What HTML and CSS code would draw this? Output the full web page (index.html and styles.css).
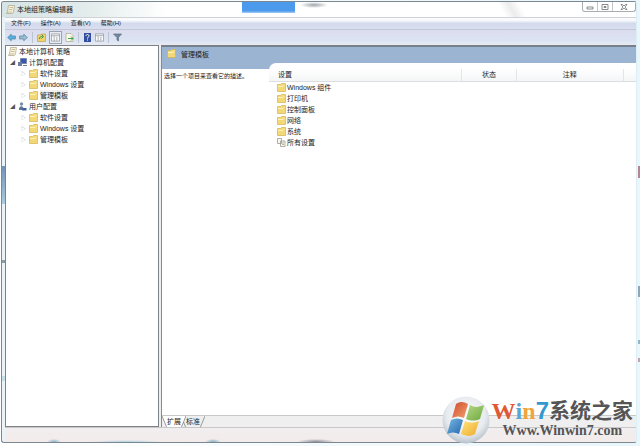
FILE: index.html
```
<!DOCTYPE html>
<html lang="zh-CN">
<head>
    <meta charset="UTF-8">
    <meta name="viewport" content="width=device-width, initial-scale=1">
    <title>本地组策略编辑器</title>
    <link rel="stylesheet" href="styles.css">
</head>
<body>
    <!-- Shared icons -->
    <svg class="symbols" aria-hidden="true">
        <symbol id="folder" viewBox="0 0 9 9">
            <path d="M.5 1.5h3l1-1h4v8h-8z" fill="#f3d878" stroke="#d3b24e" stroke-width=".7"/>
            <path d="M1 3.5h5l1.5-1.5" fill="none" stroke="#fff3b8"/>
        </symbol>
        <symbol id="scroll" viewBox="0 0 9 9">
            <path d="M2.5.5h6l-1 6.5-1 1.5h-6l1-2z" fill="#f5f1df" stroke="#aaa489" stroke-width=".7"/>
            <path d="M3.5 2.5h3.5M3 4.5h3.5M1 7h5" stroke="#bda973" stroke-width=".7"/>
        </symbol>
        <symbol id="arrow" viewBox="0 0 10 9">
            <path d="M.7 4.5l4-3.7v2h4.6v3.4H4.7v2z" fill="currentColor" stroke="#4b7897" stroke-width=".7"/>
        </symbol>
        <symbol id="pane" viewBox="0 0 10 9">
            <path d="M.5.5h9v8h-9z" fill="#fafafa" stroke="#8d949c" stroke-width=".8"/>
            <path d="M.5 2.5h9M3.5 3v5.5M6.5 4v4" stroke="#8d949c" stroke-width=".8"/>
        </symbol>
    </svg>

    <div class="window">
        <header class="title-bar">
            <svg class="icon"><use href="#scroll"/></svg>
            <h1>本地组策略编辑器</h1>
            <div class="window-buttons">
                <button type="button" aria-label="最小化"><svg viewBox="0 0 8 8"><path d="M1 4h6v2H1z"/></svg></button>
                <button type="button" aria-label="最大化"><svg viewBox="0 0 8 8"><path d="M1 1.5h6v5H1zM3 3.5h2v1H3z"/></svg></button>
                <button type="button" class="close" aria-label="关闭"><svg viewBox="0 0 8 8"><path d="M1 1.5h1.5L4 3l1.5-1.5H7L5 4l2 2.5H5.5L4 5 2.5 6.5H1L3 4z"/></svg></button>
            </div>
        </header>

        <nav class="menu-bar">
            <button type="button">文件(F)</button>
            <button type="button">操作(A)</button>
            <button type="button">查看(V)</button>
            <button type="button">帮助(H)</button>
        </nav>

        <div class="toolbar">
            <button type="button" class="back" aria-label="后退"><svg class="icon"><use href="#arrow"/></svg></button>
            <button type="button" class="forward" aria-label="前进"><svg class="icon"><use href="#arrow"/></svg></button>
            <span class="separator"></span>
            <button type="button" aria-label="上一级"><svg class="icon" viewBox="0 0 9 9"><path d="M.5 2h3l1-1h4v7.5h-8z" fill="#f0d36d" stroke="#bea04a" stroke-width=".7"/><path d="M2.5 6c0-2 1-2.5 3-2.5M4.5 1.5l2 2-2 2" fill="none" stroke="#369340"/></svg></button>
            <button type="button" class="pressed" aria-label="显示控制台树"><svg class="icon"><use href="#pane"/></svg></button>
            <button type="button" aria-label="导出列表"><svg class="icon" viewBox="0 0 9 9"><path d="M1 .5h5l2 2v6H1z" fill="#fbf9e9" stroke="#a7a890" stroke-width=".7"/><path d="M3 5.5h5M6 3.5l2 2-2 2" fill="none" stroke="#43a044"/></svg></button>
            <span class="separator"></span>
            <button type="button" aria-label="帮助"><svg class="icon" viewBox="0 0 9 9"><path d="M1 0h7v9H1z" fill="#334fa0"/><path d="M3 3c0-2 3-2 3 0 0 1-1.5 1-1.5 2.5M4.5 6.5v1" fill="none" stroke="#fff"/></svg></button>
            <button type="button" aria-label="显示操作窗格"><svg class="icon"><use href="#pane"/></svg></button>
            <span class="separator"></span>
            <button type="button" aria-label="筛选器"><svg class="icon" viewBox="0 0 9 9"><path d="M.5 1h8L5.5 4.5V8L4 7V4.5z" fill="#7189a5" stroke="#5d6d7f" stroke-width=".7"/></svg></button>
        </div>

        <main class="panes">
            <aside class="tree">
                <div class="node"><svg class="icon"><use href="#scroll"/></svg>本地计算机 策略</div>
                <ul>
                    <li>
                        <div class="node open"><svg class="icon" viewBox="0 0 9 9"><path d="M2.5.5h6v5h-6z" fill="#3757b4" stroke="#7886a8"/><path d="M0 4h4v4H0zM5 7h4v1H5z" fill="#6d7d9d"/></svg>计算机配置</div>
                        <ul>
                            <li class="node closed"><svg class="icon"><use href="#folder"/></svg>软件设置</li>
                            <li class="node closed"><svg class="icon"><use href="#folder"/></svg>Windows 设置</li>
                            <li class="node closed"><svg class="icon"><use href="#folder"/></svg><span class="current">管理模板</span></li>
                        </ul>
                    </li>
                    <li>
                        <div class="node open"><svg class="icon" viewBox="0 0 9 9"><circle cx="3.5" cy="2" r="1.7" fill="#7b91a7"/><path d="M1 8V6l2-2 2 1 1 3z" fill="#5c7797"/><path d="M5 6h3.5v2.5H4z" fill="#3e5e9f"/></svg>用户配置</div>
                        <ul>
                            <li class="node closed"><svg class="icon"><use href="#folder"/></svg>软件设置</li>
                            <li class="node closed"><svg class="icon"><use href="#folder"/></svg>Windows 设置</li>
                            <li class="node closed"><svg class="icon"><use href="#folder"/></svg>管理模板</li>
                        </ul>
                    </li>
                </ul>
            </aside>

            <section class="details">
                <div class="details-header"><svg class="icon"><use href="#folder"/></svg><h2>管理模板</h2></div>
                <div class="details-body">
                    <p class="description">选择一个项目来查看它的描述。</p>
                    <div class="list">
                        <table>
                            <thead>
                                <tr><th class="name">设置</th><th class="state">状态</th><th class="comment">注释</th><th class="rest"></th></tr>
                            </thead>
                            <tbody>
                                <tr><td colspan="4"><svg class="icon"><use href="#folder"/></svg>Windows 组件</td></tr>
                                <tr><td colspan="4"><svg class="icon"><use href="#folder"/></svg>打印机</td></tr>
                                <tr><td colspan="4"><svg class="icon"><use href="#folder"/></svg>控制面板</td></tr>
                                <tr><td colspan="4"><svg class="icon"><use href="#folder"/></svg>网络</td></tr>
                                <tr><td colspan="4"><svg class="icon"><use href="#folder"/></svg>系统</td></tr>
                                <tr><td colspan="4"><svg class="icon" viewBox="0 0 9 9"><path d="M.5.5h4v5h-4zM3.5 3h4.5v5.5H3.5z" fill="#faf8ee" stroke="#999" stroke-width=".8"/><path d="M5 5h2M5 6.5h2" stroke="#b69b58" stroke-width=".7"/></svg>所有设置</td></tr>
                            </tbody>
                        </table>
                    </div>
                </div>
                <div class="tabs">
                    <svg class="slope" viewBox="0 0 5 12"><path d="M0 0h5v12z" fill="#fff" stroke="none"/><path d="M0 0l5 12"/></svg>
                    <button type="button" class="active">扩展</button>
                    <svg class="slope" viewBox="0 0 5 12"><path d="M0 0h5L0 12z" fill="#fff" stroke="none"/><path d="M5 0L0 12M2.5 6L5 12"/></svg>
                    <button type="button">标准</button>
                    <svg class="slope" viewBox="0 0 5 12"><path d="M5 0L0 12"/></svg>
                </div>
            </section>
        </main>
        <footer class="status-bar"></footer>
    </div>

    <!-- Site mark over the bottom right corner -->
    <div class="watermark">
        <svg class="orb" viewBox="0 0 48 48">
            <defs>
                <radialGradient id="glass" cx=".5" cy=".4" r=".6"><stop offset="0" stop-color="#fff"/><stop offset=".7" stop-color="#e6eaee"/><stop offset="1" stop-color="#b7c1cb"/></radialGradient>
                <linearGradient id="red" x2="1" y2="1"><stop stop-color="#ce4c2d"/><stop offset="1" stop-color="#f3a06d"/></linearGradient>
                <linearGradient id="green" x2="1" y2="1"><stop stop-color="#b6d788"/><stop offset="1" stop-color="#6daa3c"/></linearGradient>
                <linearGradient id="blue" x2="1" y2="1"><stop stop-color="#77b8e5"/><stop offset="1" stop-color="#2868ad"/></linearGradient>
                <linearGradient id="yellow" x2="1" y2="1"><stop stop-color="#ffe47b"/><stop offset="1" stop-color="#edaa2d"/></linearGradient>
            </defs>
            <circle cx="24" cy="24" r="23.5" fill="url(#glass)"/>
            <path d="M14 8c5-3 8-2 12 0l-4 14c-4-2-8-2-12 0z" fill="url(#red)"/>
            <path d="M28 9c5 3 9 2 14 0l-4 14c-5 2-9 2-14 0z" fill="url(#green)"/>
            <path d="M9 24c4-2 8-2 12 0l-4 14c-4-2-8-2-12 0z" fill="url(#blue)"/>
            <path d="M23 25c5 2 9 2 14 0l-4 13c-5 3-9 2-14 0z" fill="url(#yellow)"/>
        </svg>
        <div class="mark-text">
            <div class="mark-name"><span class="w">W</span><span class="i">i</span><span class="n">n</span><span class="seven">7</span><span class="home">系统之家</span></div>
            <div class="mark-url">Www.Winwin7.com</div>
        </div>
    </div>
</body>
</html>
```
FILE: styles.css
```
* {
    margin: 0;
    padding: 0;
    box-sizing: border-box;
}

body {
    display: flex;
    height: 100vh;
    padding: 1px 3px 3px 1px;
    overflow: hidden;
    font-family: "Liberation Sans", "Noto Sans CJK SC", sans-serif;
    font-size: 7px;
    line-height: 11px;
    color: #222;
    background:
        linear-gradient(#b78591, #b78591) right 166px / 2px 12px no-repeat,
        linear-gradient(#91a6b8, #91a6b8) right 286px / 2px 11px no-repeat,
        linear-gradient(#91b8c4, #91b8c4) right 340px / 2px 4px no-repeat,
        linear-gradient(#c7a0a9, #c7a0a9) right 358px / 2px 4px no-repeat,
        linear-gradient(to right, #fff, #e9f6fb);
}

button {
    border: none;
    background: none;
    font: inherit;
    color: inherit;
    cursor: pointer;
}

h1, h2, th {
    font-size: 7px;
    font-weight: normal;
}

ul {
    list-style: none;
}

.symbols {
    position: absolute;
    width: 0;
    height: 0;
}

.icon {
    flex: none;
    width: 9px;
    height: 9px;
}

.window {
    flex: 1;
    display: flex;
    flex-direction: column;
    min-width: 0;
    border: 1px solid #7b8791;
    border-right-color: #dbeef5;
    border-radius: 3px;
    overflow: hidden;
    /* glass frame with the desktop showing through */
    background:
        linear-gradient(#6f94b6, #a9cde2) 0 164px / 3px 38px no-repeat,
        linear-gradient(#8a9ba8, #8a9ba8) 0 258px / 3px 3px no-repeat,
        linear-gradient(#c4e0e9, #c4e0e9) 0 374px / 3px 5px no-repeat,
        #eaf4f8;
}

/* Title bar */
.title-bar {
    display: flex;
    align-items: center;
    gap: 2px;
    height: 15px;
    padding-left: 4px;
    background:
        radial-gradient(closest-side, #9fa5ab, transparent) 298px 0 / 28px 6px no-repeat,
        linear-gradient(#4b9aeb 80%, #a8cef4) 240px 0 / 53px 11px no-repeat,
        linear-gradient(60deg, transparent 42%, #ecebed 50%, transparent 58%) 450px 0 / 120px 15px no-repeat,
        linear-gradient(to right, #d5e4e5, #e4ecec 14%, #fff 26%);
}

.window-buttons {
    display: flex;
    align-self: flex-start;
    margin-left: auto;
    border: 1px solid #a8adb2;
    border-top: none;
    border-radius: 0 0 3px 3px;
}

.window-buttons button {
    display: flex;
    align-items: center;
    justify-content: center;
    width: 15px;
    height: 9px;
    border-right: 1px solid #c3c7ca;
}

.window-buttons .close {
    width: 22px;
    border-right: none;
}

.window-buttons svg {
    width: 8px;
    height: 8px;
    fill: #fff;
    stroke: #6d7174;
    stroke-width: .8;
}

/* Menu and toolbar */
.menu-bar {
    display: flex;
    gap: 10px;
    height: 13px;
    margin-left: 3px;
    padding-left: 6px;
    font-size: 6px;
    border-top: 1px solid #cfd2d6;
    border-bottom: 1px solid #c2c7d8;
    background: linear-gradient(#fafbfd 20%, #d3daeb 50%, #dadff0);
}

.toolbar {
    display: flex;
    align-items: center;
    gap: 3px;
    height: 15px;
    margin-left: 3px;
    padding-left: 2px;
    background: linear-gradient(#dcdced, #dbe4f4 70%, #e8eaf0);
}

.toolbar button {
    display: flex;
}

.toolbar .back {
    color: #55b1e2;
}

.toolbar .forward {
    color: #9abdd1;
    transform: scaleX(-1);
}

.toolbar .pressed {
    padding: 1px;
    border: 1px solid #9aa3b4;
    background: #e9ecf3;
}

.separator {
    width: 1px;
    height: 11px;
    margin: 0 1px;
    background: #bcc3d2;
}

/* Panes */
.panes {
    flex: 1;
    display: flex;
    gap: 2px;
    min-height: 0;
    margin-left: 3px;
    background: #eeeeef;
}

.tree {
    flex: 0 0 154px;
    border: 1px solid #7d8288;
    border-left-color: #6e8793;
    background: #fff;
}

.node {
    display: flex;
    align-items: center;
    gap: 2px;
    padding-left: 2px;
}

.node::before {
    flex: none;
    width: 6px;
    font-size: 5px;
    color: #555;
}

.tree > ul .node {
    padding-left: 4px;
}

.tree ul ul .node {
    padding-left: 15px;
}

.open::before {
    content: "◢";
}

.closed::before {
    content: "▷";
    color: #999;
}

.current {
    background: #f1f1f1;
}

.details {
    flex: 1;
    display: flex;
    flex-direction: column;
    min-width: 0;
    border-top: 2px solid #77808a;
    border-left: 1px solid #858b91;
    background: #fff;
}

.details-header {
    display: flex;
    gap: 5px;
    height: 16px;
    padding: 2px 5px;
    background: #9ab4d2;
}

.details-body {
    flex: 1;
    display: flex;
    background: linear-gradient(#9ab4d2, #9ab4d2) 0 0 / 100% 6px no-repeat;
}

.description {
    flex: 0 0 107px;
    padding: 8px 0 0 2px;
    font-size: 6px;
    white-space: nowrap;
}

.list {
    flex: 1;
    padding-top: 6px;
    border-top-left-radius: 7px;
    background: #fff;
}

table {
    width: 100%;
    table-layout: fixed;
    border-collapse: collapse;
}

th {
    height: 12px;
    border-right: 1px solid #e3e6e9;
    border-bottom: 1px solid #dcdfe2;
    background: linear-gradient(#fff, #f4f5f6);
}

.name {
    padding-left: 9px;
    text-align: left;
}

.state {
    width: 15%;
}

.comment {
    width: 29%;
}

.rest {
    width: 13px;
    border-right: none;
}

td {
    height: 11px;
    padding-left: 8px;
}

td .icon {
    margin-right: 1px;
    vertical-align: middle;
}

.tabs {
    display: flex;
    height: 12px;
    background: #efeff0;
    border-top: 1px solid #c8c8c8;
}

.tabs .active {
    background: #fff;
}

.slope {
    width: 5px;
    height: 12px;
    fill: none;
    stroke: #777;
    stroke-width: .7;
}

.status-bar {
    height: 15px;
    margin-left: 3px;
    border-top: 1px solid #c9c7c8;
    background:
        radial-gradient(closest-side, #91b5cc, transparent) 42px 11px / 14px 5px no-repeat,
        radial-gradient(closest-side, #a9cfe0, transparent) 84px 12px / 75px 4px no-repeat,
        radial-gradient(closest-side, #86b4c4, transparent) 200px 11px / 16px 5px no-repeat,
        radial-gradient(closest-side, #90929c, transparent) 292px 11px / 38px 5px no-repeat,
        linear-gradient(#f1eeef, #f3ebea);
}

/* Watermark */
.watermark {
    position: absolute;
    right: 7px;
    bottom: 2px;
    display: flex;
    gap: 2px;
}

.orb {
    width: 48px;
    height: 48px;
}

.mark-text {
    padding-top: 3px;
    font-family: "Liberation Serif", "Noto Sans CJK SC", serif;
    font-weight: bold;
    color: #555;
}

.mark-name {
    display: flex;
    align-items: center;
    height: 24px;
    font-size: 24px;
    line-height: 24px;
}

.w {
    color: #df5935;
}

.i {
    color: #5ca4d3;
}

.n {
    color: #f2a43c;
}

.seven {
    font-family: "Liberation Sans", sans-serif;
    color: #3498d0;
}

.home {
    font-size: 21px;
}

.mark-url {
    font-size: 14px;
    line-height: 16px;
    text-align: center;
}
```
